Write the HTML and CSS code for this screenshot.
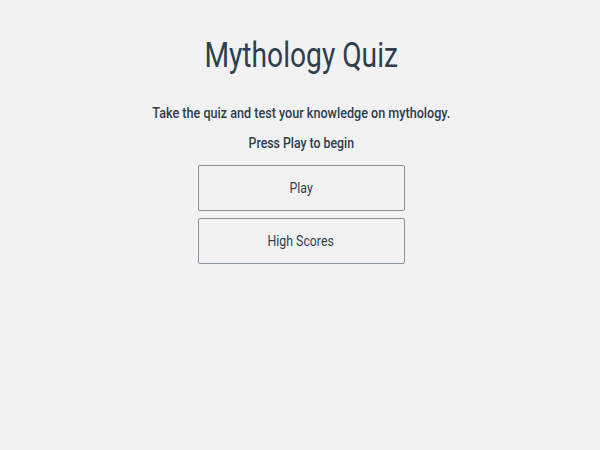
FILE: index.html
```html
<!DOCTYPE html>
<html lang="en">
<head>
<meta charset="utf-8">
<title>Mythology Quiz</title>
<link rel="stylesheet" href="styles.css">
</head>
<body>
<main class="quiz">
  <h1 class="quiz-title"><span class="narrow narrow-title">Mythology Quiz</span></h1>
  <p class="quiz-intro"><span class="narrow narrow-intro">Take the quiz and test your knowledge on mythology.</span></p>
  <p class="quiz-prompt"><span class="narrow narrow-prompt">Press Play to begin</span></p>
  <div class="quiz-actions">
    <button class="quiz-btn" type="button"><span class="narrow narrow-btn">Play</span></button>
    <button class="quiz-btn" type="button"><span class="narrow narrow-btn">High Scores</span></button>
  </div>
</main>
</body>
</html>
```
FILE: styles.css
```css
html, body {
  margin: 0;
  padding: 0;
  background: #f2f2f2;
}
body {
  font-family: Roboto, "Liberation Sans", sans-serif;
  color: #2c3e50;
}
.quiz {
  display: flex;
  flex-direction: column;
  align-items: center;
  padding: 36px 0 0 2px;
}
.narrow {
  display: inline-block;
  white-space: nowrap;
}
.narrow-title { transform: scaleX(0.805); }
.narrow-intro { transform: scaleX(0.84); }
.narrow-prompt { transform: scaleX(0.82); }
.narrow-btn { transform: scaleX(0.88); }
.quiz-title {
  margin: 0;
  font-size: 35px;
  font-weight: 400;
  line-height: 40px;
}
.quiz-intro {
  margin: 27px 0 0;
  font-size: 15px;
  font-weight: 500;
  line-height: 20px;
}
.quiz-prompt {
  margin: 10px 0 0;
  font-size: 15px;
  font-weight: 500;
  line-height: 20px;
}
.quiz-actions {
  display: flex;
  flex-direction: column;
  gap: 7px;
  margin-top: 12px;
}
.quiz-btn {
  box-sizing: border-box;
  width: 207px;
  height: 46px;
  padding: 0;
  background: transparent;
  border: 1px solid #8a939c;
  border-radius: 2px;
  font-family: inherit;
  font-size: 14px;
  color: #2c3e50;
  cursor: pointer;
}
```
